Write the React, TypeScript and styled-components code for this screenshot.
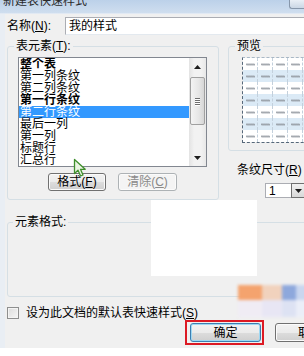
import React from "react";
import styled, { createGlobalStyle } from "styled-components";

const Global = createGlobalStyle`
  html, body { margin: 0; padding: 0; background: #ffffff; }
  body { width: 304px; height: 356px; overflow: hidden; }
`;

const Window = styled.div`
  position: relative;
  width: 304px;
  height: 356px;
  overflow: hidden;
  background: #f0f0f0;
  font-family: "Liberation Sans", "Noto Sans CJK SC", sans-serif;
  font-size: 12px;
  line-height: 12px;
  color: #000;
  display: flex;
  flex-direction: column;
`;

const TitleBar = styled.div`
  flex: none;
  height: 13px;
  display: flex;
  justify-content: space-between;
  align-items: flex-start;
  background: linear-gradient(#bcd1e9, #cfdeef);
  border-bottom: 1px solid #e1e9f3;
  overflow: hidden;
`;

const TitleText = styled.div`
  margin-top: -5px;
  padding-left: 3px;
  color: #2a2a2a;
  white-space: nowrap;
`;

const TitleButton = styled.div`
  width: 15px;
  height: 9px;
  box-sizing: border-box;
  border: 1px solid #8797ab;
  border-top: none;
  border-right: none;
  border-radius: 0 0 0 3px;
  background: linear-gradient(#e9eff6, #cbd7e5);
`;

const Body = styled.div`
  flex: 1;
  display: flex;
  flex-direction: column;
  border-left: 5px solid #e9eef4;
  padding-left: 2px;
  min-height: 0;
  min-width: 0;
`;

const NameRow = styled.div`
  display: flex;
  align-items: center;
  margin-top: 3px;
  height: 18px;
`;

const FieldLabel = styled.div<{ $w?: number }>`
  flex: none;
  width: ${(p) => (p.$w ? `${p.$w}px` : "auto")};
  white-space: nowrap;
`;

const TextBox = styled.div`
  flex: none;
  width: 260px;
  height: 18px;
  box-sizing: border-box;
  border: 1px solid #abadb3;
  border-right: none;
  border-bottom-color: #e3e9ef;
  background: #fff;
  padding: 2px 0 0 3px;
`;

const MiddleRow = styled.div`
  display: flex;
  align-items: flex-start;
  gap: 9px;
  margin-top: 5px;
`;

const Group = styled.fieldset<{ $w: number; $pad: string }>`
  flex: none;
  margin: 0;
  box-sizing: border-box;
  width: ${(p) => p.$w}px;
  padding: ${(p) => p.$pad};
  border: 1px solid #d5dfe5;
  border-radius: 3px;
  min-width: 0;
`;

const GroupLegend = styled.legend<{ $shift: number }>`
  padding: 0 2px;
  margin-left: ${(p) => p.$shift}px;
  line-height: 12px;
  height: 12px;
  white-space: nowrap;
`;

const ListBox = styled.div`
  width: 189px;
  height: 110px;
  box-sizing: border-box;
  border: 1px solid #828790;
  background: #fff;
  display: flex;
`;

const Items = styled.div`
  flex: 1;
  display: flex;
  flex-direction: column;
  overflow: hidden;
`;

const Item = styled.div<{ $bold?: boolean; $sel?: boolean }>`
  flex: none;
  height: 12px;
  line-height: 12px;
  padding-left: 1px;
  white-space: nowrap;
  font-weight: ${(p) => (p.$bold ? 700 : 400)};
  background: ${(p) => (p.$sel ? "#3399ff" : "transparent")};
  color: ${(p) => (p.$sel ? "#fff" : "#000")};
`;

const ScrollBar = styled.div`
  flex: none;
  width: 17px;
  display: flex;
  flex-direction: column;
  background: linear-gradient(90deg, #e3e3e3, #f2f2f2 30%, #f2f2f2 70%, #e8e8e8);
`;

const ArrowBtn = styled.div`
  height: 17px;
  display: flex;
  align-items: center;
  justify-content: center;
`;

const Track = styled.div`
  flex: 1;
  display: flex;
  flex-direction: column;
  padding-top: 2px;
`;

const Thumb = styled.div`
  height: 48px;
  margin: 0 1px;
  box-sizing: border-box;
  border: 1px solid #a0a0a0;
  border-radius: 2px;
  background: linear-gradient(90deg, #f4f4f4, #e6e6e6 60%, #d6d6d6);
  display: flex;
  flex-direction: column;
  align-items: center;
  justify-content: center;
  gap: 1px;
`;

const Grip = styled.div`
  width: 5px;
  height: 1px;
  background: #6e6e6e;
  box-shadow: 0 1px 0 #fff;
`;

const ButtonRow = styled.div`
  display: flex;
  gap: 12px;
  padding-left: 30px;
  margin-top: 6px;
`;

const Button = styled.div<{ $w: number; $h?: number; $disabled?: boolean; $default?: boolean }>`
  flex: none;
  width: ${(p) => p.$w}px;
  height: ${(p) => p.$h ?? 18}px;
  box-sizing: border-box;
  border: 1px solid ${(p) => (p.$disabled ? "#adb2b5" : p.$default ? "#3c7fb1" : "#707070")};
  border-radius: 3px;
  background: ${(p) =>
    p.$disabled
      ? "#f4f4f4"
      : "linear-gradient(#f2f2f2 0%, #ebebeb 50%, #dddddd 50%, #cfcfcf 100%)"};
  box-shadow: inset 0 0 0 1px ${(p) => (p.$default ? "#9fd8f3" : "#fbfbfb")};
  color: ${(p) => (p.$disabled ? "#8a8a8a" : "#000")};
  display: flex;
  align-items: center;
  justify-content: center;
  white-space: nowrap;
  overflow: hidden;
`;

const RightCol = styled.div`
  flex: none;
  width: 110px;
  display: flex;
  flex-direction: column;
`;

const PreviewGrid = styled.div`
  display: grid;
  grid-template-columns: repeat(6, 15px);
  grid-auto-rows: 12px;
  border-left: 1px dashed #56687a;
  border-bottom: 1px dashed #56687a;
  border-top: 1px dashed #a9b8c6;
  width: max-content;
`;

const Cell = styled.div<{ $band: boolean }>`
  background: ${(p) => (p.$band ? "#dbeaf6" : "#ffffff")};
  border-right: 1px dashed #c3d0dc;
  display: flex;
  align-items: center;
  justify-content: center;
`;

const StripeLabel = styled.div`
  margin: 13px 0 0 9px;
  white-space: nowrap;
`;

const SpinRow = styled.div`
  display: flex;
  margin: 7px 0 0 37px;
  height: 15px;
`;

const SpinValue = styled.div`
  width: 26px;
  box-sizing: border-box;
  border: 1px solid #abadb3;
  border-right: none;
  background: #fff;
  padding: 1px 0 0 3px;
`;

const SpinButton = styled.div`
  width: 14px;
  box-sizing: border-box;
  border: 1px solid #707070;
  background: linear-gradient(#f2f2f2, #d8d8d8);
  display: flex;
  align-items: center;
  justify-content: center;
`;

const FormatGroup = styled(Group)`
  margin-top: 16px;
  height: 81px;
`;

const CheckRow = styled.div`
  display: flex;
  align-items: center;
  gap: 7px;
  margin-top: 10px;
  height: 12px;
`;

const CheckBox = styled.div`
  width: 12px;
  height: 12px;
  box-sizing: border-box;
  border: 1px solid #8e8f8f;
  background: linear-gradient(135deg, #dcdcdc, #f6f6f6);
  box-shadow: inset 0 0 0 1px #f4f4f4;
`;

const DialogButtons = styled.div`
  display: flex;
  align-items: center;
  gap: 11px;
  padding-left: 178px;
  margin-top: 1px;
`;

const FocusFrame = styled.div`
  flex: none;
  width: 79px;
  height: 25px;
  box-sizing: border-box;
  border: 2px solid #dc1a24;
  display: flex;
  align-items: center;
  justify-content: center;
  padding-left: 2px;
`;

const Footer = styled.div`
  flex: none;
  height: 8px;
  background: #ffffff;
`;

const Blank = styled.div`
  position: absolute;
  left: 151px;
  top: 200px;
  width: 106px;
  height: 76px;
  background: #ffffff;
`;

const Cursor = styled.svg`
  position: absolute;
  left: 73px;
  top: 158px;
`;

const Watermark = styled.div`
  position: absolute;
  left: 238px;
  top: 285px;
  width: 70px;
  height: 32px;
  display: grid;
  grid-template-columns: 24px 20px 14px 12px;
  grid-template-rows: 15px 17px;
  filter: blur(1.5px);
`;

const Tile = styled.div<{ $c: string }>`
  background: ${(p) => p.$c};
`;

const U = styled.span`
  text-decoration: underline;
`;

const items: { t: string; bold?: boolean; sel?: boolean }[] = [
  { t: "整个表", bold: true },
  { t: "第一列条纹" },
  { t: "第二列条纹" },
  { t: "第一行条纹", bold: true },
  { t: "第二行条纹", sel: true },
  { t: "最后一列" },
  { t: "第一列" },
  { t: "标题行" },
  { t: "汇总行" },
];

const Squiggle = () => (
  <svg width="9" height="3" viewBox="0 0 9 3">
    <polyline
      points="0,2.5 1,0.5 2,2.5 3,0.5 4,2.5 5,0.5 6,2.5 7,0.5 8,2.5 9,0.5"
      fill="none"
      stroke="#8e949c"
      strokeWidth="0.8"
    />
  </svg>
);

const Tri = ({ up }: { up?: boolean }) => (
  <svg width="7" height="4" viewBox="0 0 7 4">
    <polygon points={up ? "0,4 7,4 3.5,0" : "0,0 7,0 3.5,4"} fill="#1e1e1e" />
  </svg>
);

export default function App() {
  const rows = Array.from({ length: 7 });
  const cols = Array.from({ length: 6 });
  const tiles = ["#f4a36e", "#f1d2bd", "#8ea8dc", "#c9d6ef", "#f0ecf4", "#e8e6f4", "#dde2f3", "#ebeef8"];
  return (
    <Window>
      <Global />
      <TitleBar>
        <TitleText>新建表快速样式</TitleText>
        <TitleButton />
      </TitleBar>
      <Body>
        <NameRow>
          <FieldLabel $w={58}>
            名称(<U>N</U>):
          </FieldLabel>
          <TextBox>我的样式</TextBox>
        </NameRow>
        <MiddleRow>
          <Group $w={212} $pad="5px 11px 8px 10px">
            <GroupLegend $shift={-4}>
              表元素(<U>T</U>):
            </GroupLegend>
            <ListBox>
              <Items>
                {items.map((it) => (
                  <Item key={it.t} $bold={it.bold} $sel={it.sel}>
                    {it.t}
                  </Item>
                ))}
              </Items>
              <ScrollBar>
                <ArrowBtn>
                  <Tri up />
                </ArrowBtn>
                <Track>
                  <Thumb>
                    <Grip />
                    <Grip />
                    <Grip />
                    <Grip />
                  </Thumb>
                </Track>
                <ArrowBtn>
                  <Tri />
                </ArrowBtn>
              </ScrollBar>
            </ListBox>
            <ButtonRow>
              <Button $w={58}>
                格式(<U>F</U>)
              </Button>
              <Button $w={59} $disabled>
                清除(<U>C</U>)
              </Button>
            </ButtonRow>
          </Group>
          <RightCol>
            <Group $w={110} $pad="5px 0 7px 13px">
              <GroupLegend $shift={-7}>预览</GroupLegend>
              <PreviewGrid>
                {rows.map((_, r) =>
                  cols.map((__, c) => (
                    <Cell key={`${r}-${c}`} $band={r % 2 === 1}>
                      <Squiggle />
                    </Cell>
                  ))
                )}
              </PreviewGrid>
            </Group>
            <StripeLabel>
              条纹尺寸(<U>R</U>)
            </StripeLabel>
            <SpinRow>
              <SpinValue>1</SpinValue>
              <SpinButton>
                <Tri />
              </SpinButton>
            </SpinRow>
          </RightCol>
        </MiddleRow>
        <FormatGroup $w={310} $pad="0 0 0 8px">
          <GroupLegend $shift={-3}>元素格式:</GroupLegend>
        </FormatGroup>
        <CheckRow>
          <CheckBox />
          <FieldLabel>
            设为此文档的默认表快速样式(<U>S</U>)
          </FieldLabel>
        </CheckRow>
        <DialogButtons>
          <FocusFrame>
            <Button $w={71} $h={19} $default>
              确定
            </Button>
          </FocusFrame>
          <Button $w={70} $h={19}>
            取消
          </Button>
        </DialogButtons>
      </Body>
      <Footer />
      <Blank />
      <Watermark>
        {tiles.map((c, i) => (
          <Tile key={i} $c={c} />
        ))}
      </Watermark>
      <Cursor width="15" height="20" viewBox="0 0 15 20">
        <path
          d="M1.5 1.5 L1.5 15.5 L5 12.2 L7.6 18 L10 17 L7.5 11.3 L12.2 11.3 Z"
          fill="#eaf5e2"
          stroke="#3f8f2c"
          strokeWidth="1.3"
          strokeLinejoin="round"
        />
      </Cursor>
    </Window>
  );
}
